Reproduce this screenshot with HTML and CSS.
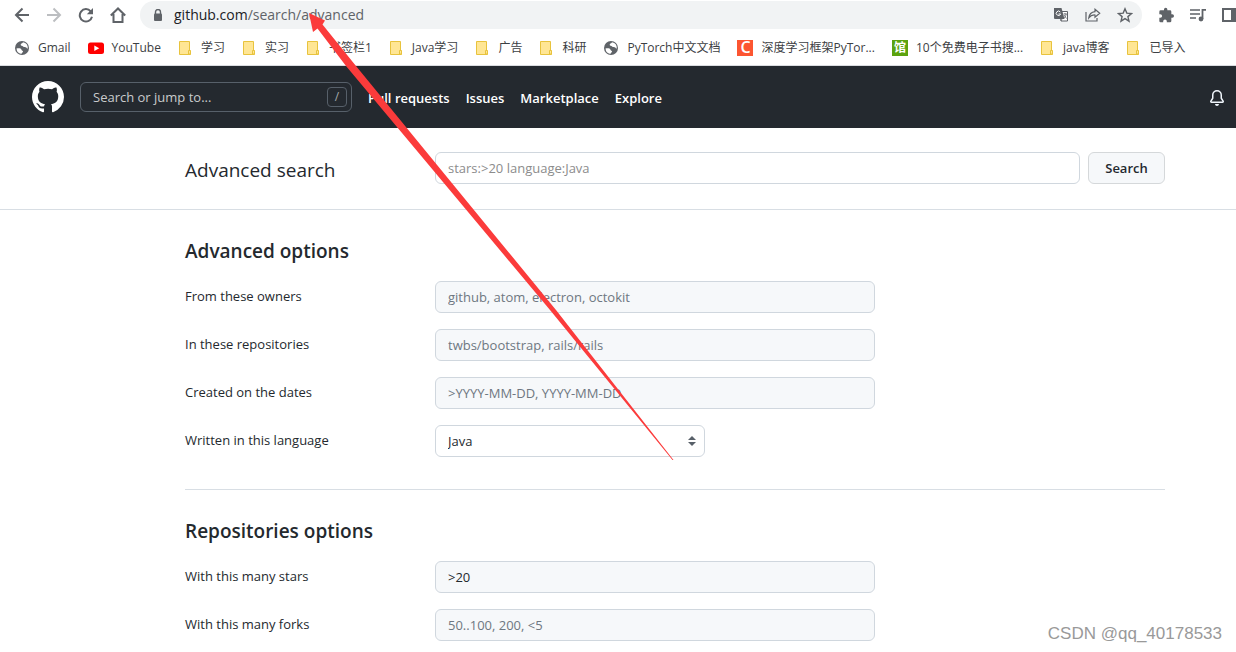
FILE: index.html
```html
<!DOCTYPE html>
<html lang="en">
<head>
<meta charset="utf-8">
<title>Advanced search</title>
<link rel="stylesheet" href="styles.css">
</head>
<body>
<svg class="defs" width="0" height="0" aria-hidden="true">
  <symbol id="folder" viewBox="0 0 16 16"><path d="M1.500 1.500h10v9.500h1v3.500h-11z" fill="#ffe694" stroke="#e8c33d"/><path d="M10.500 14v-3.500h2V14z" fill="#ffe694" stroke="#e8c33d"/></symbol>
  <symbol id="globe" viewBox="0 0 16 16"><circle cx="8" cy="8" r="7" fill="#5f6368"/><path d="M2.500 8.500c2.500-.6 4.500-.2 5 1.200.4 1.200 1.700.7 1.500 2-.2.900-1.500.9-1.600 2.300A6 6 0 0 1 2.500 8.500zM9 2.300c-.4 1.200-2.300 1-2.300 2.400 0 1.300 1.800.8 2.400 1.800.7 1.200 2.400.3 3.200 1 .6.600.8 1.300 1.500 1A6 6 0 0 0 9 2.300z" fill="#fff"/></symbol>
</svg>

<div class="browser">
  <div class="toolbar">
    <button class="tool" aria-label="Back"><svg width="16" height="16" viewBox="0 0 16 16" fill="none" stroke="#5f6368" stroke-width="2"><path d="M15 8H2.500M8.500 1.500 2 8l6.500 6.500"/></svg></button>
    <button class="tool" aria-label="Forward"><svg width="16" height="16" viewBox="0 0 16 16" fill="none" stroke="#bcbec1" stroke-width="2"><path d="M1 8h12.500M7.500 1.500 14 8l-6.500 6.500"/></svg></button>
    <button class="tool" aria-label="Reload"><svg width="16" height="16" viewBox="0 0 16 16"><path d="M12.700 4.300A6.200 6.200 0 1 0 14 9.800" fill="none" stroke="#5f6368" stroke-width="2"/><path d="M15 1v6.200H8.800z" fill="#5f6368"/></svg></button>
    <button class="tool" aria-label="Home"><svg width="16" height="16" viewBox="0 0 16 16" fill="none" stroke="#5f6368" stroke-width="2"><path d="M.800 8.500 8 1.500l7.200 7M3.500 7v8h9V7"/></svg></button>
    <div class="address">
      <svg width="10" height="12" viewBox="0 0 10 12"><path d="M2.500 5V3a2.500 2.500 0 0 1 5 0v2" fill="none" stroke="#5f6368" stroke-width="1.400"/><rect x="1" y="4.500" width="8" height="7.500" rx="1" fill="#5f6368"/></svg>
      <span class="url">github.com<span class="path">/search/advanced</span></span>
      <button class="tool" aria-label="Translate"><svg width="16" height="16" viewBox="0 0 16 16"><path d="M6.500 4.500h8v9.500H8z" fill="#fff" stroke="#5f6368"/><path d="M1 1h7.500l3 11H2a1 1 0 0 1-1-1z" fill="#5f6368"/><path d="M7.300 5A2.200 2.200 0 1 0 7.600 7H5.500" fill="none" stroke="#fff"/><path d="M10.500 7h3.500M12 6v1m1 0c0 2-1 3.500-2 4m0-3 2.500 3.500M9 12l-1 2" fill="none" stroke="#5f6368" stroke-width=".800"/></svg></button>
      <button class="tool" aria-label="Share"><svg width="16" height="16" viewBox="0 0 16 16" fill="none" stroke="#5f6368" stroke-width="1.200"><path d="M1 5v9h11v-3"/><path d="M10 2.200 14.700 6.300 10 10.200V8C7 7.700 5.200 9 3.800 10.800 4.200 7.500 6.200 5 10 4.600z"/></svg></button>
      <button class="tool" aria-label="Bookmark"><svg width="16" height="16" viewBox="0 0 16 16" fill="none" stroke="#5f6368" stroke-width="1.400"><path d="m8 1.800 1.800 4.300 4.700.4-3.600 3.100 1.100 4.600L8 11.700l-4 2.500 1.100-4.600-3.600-3.100 4.700-.4z"/></svg></button>
    </div>
    <button class="tool" aria-label="Extensions"><svg width="16" height="16" viewBox="0 0 24 24" fill="#5f6368"><path d="M21.500 11H20V7a2 2 0 0 0-2-2h-4V3.500a2.500 2.500 0 0 0-5 0V5H4a2 2 0 0 0-2 2v3.800h1.500a2.700 2.700 0 0 1 0 5.400H2V21a2 2 0 0 0 2 2h3.800v-1.500a2.700 2.700 0 0 1 5.400 0V23H18a2 2 0 0 0 2-2v-5h1.500a2.500 2.500 0 0 0 0-5z"/></svg></button>
    <button class="tool" aria-label="Media"><svg width="16" height="16" viewBox="0 0 16 16"><path d="M0 3h10M0 7h10M0 11h6" stroke="#5f6368" stroke-width="1.600"/><path d="M12.500 12V2.800H16" fill="none" stroke="#5f6368" stroke-width="1.800"/><circle cx="11" cy="12" r="2.400" fill="#5f6368"/></svg></button>
    <button class="tool" aria-label="Side panel"><svg width="16" height="16" viewBox="0 0 16 16"><path d="M1 2h14v12H1z" fill="none" stroke="#5f6368" stroke-width="2"/><path d="M9 2h6v12H9z" fill="#5f6368"/></svg></button>
  </div>
  <nav class="bookmarks" aria-label="Bookmarks">
    <a href="#"><svg><use href="#globe"/></svg>Gmail</a>
    <a href="#"><svg viewBox="0 0 16 16"><rect y="2.500" width="16" height="11.500" rx="2.500" fill="#f00"/><path d="m6.300 5.500 5 2.800-5 2.800z" fill="#fff"/></svg>YouTube</a>
    <a class="folder" href="#"><svg><use href="#folder"/></svg>学习</a>
    <a class="folder" href="#"><svg><use href="#folder"/></svg>实习</a>
    <a class="folder" href="#"><svg><use href="#folder"/></svg>书签栏1</a>
    <a class="folder" href="#"><svg><use href="#folder"/></svg>Java学习</a>
    <a class="folder" href="#"><svg><use href="#folder"/></svg>广告</a>
    <a class="folder" href="#"><svg><use href="#folder"/></svg>科研</a>
    <a href="#"><svg><use href="#globe"/></svg>PyTorch中文文档</a>
    <a href="#"><span class="favicon csdn">C</span>深度学习框架PyTor...</a>
    <a href="#"><span class="favicon guan">馆</span>10个免费电子书搜...</a>
    <a class="folder" href="#"><svg><use href="#folder"/></svg>java博客</a>
    <a class="folder" href="#"><svg><use href="#folder"/></svg>已导入</a>
  </nav>
</div>

<header class="site-header">
  <a class="logo" href="#" aria-label="GitHub"><svg width="32" height="32" viewBox="0 0 16 16" fill="#fff"><path d="M8 0C3.580 0 0 3.580 0 8c0 3.540 2.290 6.530 5.470 7.590.4.070.55-.17.55-.38 0-.19-.01-.82-.01-1.490-2.010.37-2.530-.49-2.690-.94-.09-.23-.48-.94-.82-1.130-.28-.15-.68-.52-.01-.53.63-.01 1.080.58 1.230.82.72 1.210 1.870.87 2.330.66.07-.52.28-.87.51-1.070-1.780-.2-3.640-.89-3.640-3.950 0-.87.31-1.590.82-2.150-.08-.2-.36-1.020.08-2.120 0 0 .67-.21 2.200.82.64-.18 1.320-.27 2-.27s1.360.09 2 .27c1.530-1.040 2.200-.82 2.200-.82.44 1.100.16 1.920.08 2.120.51.56.82 1.270.82 2.150 0 3.070-1.870 3.750-3.650 3.950.29.25.54.73.54 1.480 0 1.070-.01 1.930-.01 2.200 0 .21.15.46.55.38A8.010 8.010 0 0 0 16 8c0-4.420-3.580-8-8-8z"/></svg></a>
  <div class="jump">
    <input type="text" placeholder="Search or jump to..." aria-label="Search or jump to">
    <kbd>/</kbd>
  </div>
  <nav class="site-nav" aria-label="Global">
    <a href="#">Pull requests</a><a href="#">Issues</a><a href="#">Marketplace</a><a href="#">Explore</a>
  </nav>
  <button class="bell" aria-label="Notifications"><svg width="16" height="16" viewBox="0 0 16 16" fill="#f0f6fc"><path d="M8 16a2 2 0 0 0 1.985-1.750c.017-.137-.097-.25-.235-.25h-3.500c-.138 0-.252.113-.235.25A2 2 0 0 0 8 16z"/><path fill-rule="evenodd" d="M8 1.500A3.500 3.500 0 0 0 4.500 5v2.947c0 .346-.102.683-.294.970l-1.703 2.556a.18.018 0 0 0-.003.010l.001.006.004.006.006.004.007.001h10.964l.007-.001.006-.004.004-.006.001-.007a.17.017 0 0 0-.003-.010l-1.703-2.554a1.750 1.750 0 0 1-.294-.970V5A3.500 3.500 0 0 0 8 1.500zM3 5a5 5 0 0 1 10 0v2.947c0 .5.015.098.042.139l1.703 2.555A1.518 1.518 0 0 1 13.482 13H2.518a1.518 1.518 0 0 1-1.263-2.360l1.703-2.554A.25.25 0 0 0 3 7.947V5z"/></svg></button>
</header>

<main>
  <form>
    <div class="page-head">
      <h1><label for="q">Advanced search</label></h1>
      <div class="query">
        <input id="q" type="text" class="field plain" placeholder="stars:&gt;20 language:Java">
        <button class="search" type="submit">Search</button>
      </div>
    </div>
    <div class="options">
      <fieldset>
        <legend>Advanced options</legend>
        <div class="row"><label for="owners">From these owners</label><input id="owners" class="field" type="text" placeholder="github, atom, electron, octokit"></div>
        <div class="row"><label for="repos">In these repositories</label><input id="repos" class="field" type="text" placeholder="twbs/bootstrap, rails/rails"></div>
        <div class="row"><label for="dates">Created on the dates</label><input id="dates" class="field" type="text" placeholder="&gt;YYYY-MM-DD, YYYY-MM-DD"></div>
        <div class="row"><label for="lang">Written in this language</label>
          <div class="select"><select id="lang" class="field plain"><option>Java</option></select><svg width="8" height="10" viewBox="0 0 8 10" fill="#586069"><path d="m4 0 4 4H0zM0 6h8l-4 4z"/></svg></div></div>
      </fieldset>
      <fieldset>
        <legend>Repositories options</legend>
        <div class="row"><label for="stars">With this many stars</label><input id="stars" class="field" type="text" value="&gt;20"></div>
        <div class="row"><label for="forks">With this many forks</label><input id="forks" class="field" type="text" placeholder="50..100, 200, &lt;5"></div>
      </fieldset>
    </div>
  </form>
</main>

<svg class="arrow" width="680" height="470" viewBox="0 0 680 470" aria-hidden="true"><path d="M309 13 325 20.500 322.500 24.500 356 66 556 310 673.500 460H672.500L550 310 346 66 317.500 28.500 313 32z" fill="#fb3b3b"/></svg>
<div class="watermark">CSDN @qq_40178533</div>
</body>
</html>
```
FILE: styles.css
```css
* { box-sizing: border-box; }
body {
  margin: 0;
  background: #fff;
  color: #24292e;
  font: 13px/20px "Open Sans", "Noto Sans CJK SC", sans-serif;
  overflow: hidden;
}
button, input, select { font: inherit; color: inherit; }
button { padding: 0; border: 0; background: none; }
a { color: inherit; text-decoration: none; }
svg { display: block; flex: none; }
.defs, .arrow { position: absolute; top: 0; left: 0; pointer-events: none; }

.toolbar { display: flex; align-items: center; gap: 16px; height: 30px; padding-left: 14px; overflow: hidden; }
.tool { flex: none; width: 16px; height: 16px; }
.toolbar > .tool:last-child { margin-right: -2px; }
.address {
  display: flex; flex: 1; align-items: center; gap: 16px;
  height: 28px; margin-left: -2px; padding: 0 9px 0 13px;
  border-radius: 14px; background: #f1f3f4;
}
.url { flex: 1; margin-left: -5px; font-size: 14px; color: #202124; }
.path { color: #5f6368; }
.bookmarks {
  display: flex; gap: 17px; height: 36px; padding: 0 14px;
  align-items: center; border-bottom: 1px solid #dadce0;
  font-size: 12px; line-height: 16px; color: #3c4043; white-space: nowrap;
}
.bookmarks a { display: flex; align-items: center; gap: 8px; }
.bookmarks .folder { gap: 7px; }
.bookmarks svg, .favicon { width: 16px; height: 16px; }
.favicon { color: #fff; text-align: center; }
.csdn { background: #fc5531; font-size: 16px; font-weight: 600; line-height: 15px; }
.guan { background: #5ba30f; font-weight: 700; }

.site-header { display: flex; align-items: center; gap: 16px; height: 62px; padding: 0 11px 0 32px; background: #24292f; color: #fff; }
.jump { display: flex; align-items: center; width: 272px; height: 30px; padding: 0 4px 0 12px; border: 1px solid #57606a; border-radius: 6px; }
.jump input { flex: 1; min-width: 0; padding: 0; border: 0; background: none; outline: 0; }
.jump input::placeholder { color: #c9cbcd; opacity: 1; }
kbd { width: 20px; height: 20px; border: 1px solid #57606a; border-radius: 4px; color: #a5a9ad; font: 12px/18px "Open Sans", sans-serif; text-align: center; }
.site-nav { display: flex; flex: 1; gap: 16px; padding-top: 2px; font-weight: 600; }
.bell { padding-top: 2px; }

.page-head, .options { padding: 0 71px 0 185px; }
.page-head { display: flex; align-items: center; height: 82px; padding-bottom: 2px; border-bottom: 1px solid #d8dee4; }
h1 { width: 250px; margin: 0; padding-top: 4px; font-size: 19px; line-height: 28px; font-weight: 400; }
.query { display: flex; flex: 1; gap: 8px; }
.field { width: 440px; height: 32px; padding: 0 12px; border: 1px solid #d0d7de; border-radius: 6px; background: #f6f8fa; outline: 0; }
.field::placeholder { color: #6e7781; opacity: 1; }
.plain { background: #fff; }
.plain::placeholder { color: #8c8c8c; }
.query .field { flex: 1; width: auto; }
.search { width: 77px; height: 32px; border: 1px solid #d5d8da; border-radius: 6px; background: #f6f8fa; font-weight: 600; }
fieldset { margin: 0; padding: 26px 0 32px; border: 0; border-bottom: 1px solid #d8dee4; }
fieldset:last-child { border-bottom: 0; }
legend { float: left; width: 100%; margin-bottom: 15px; padding: 0; font-size: 19px; line-height: 30px; font-weight: 600; }
.row { display: flex; clear: both; margin-bottom: 16px; }
.row:last-child { margin-bottom: 0; }
.row > label { width: 250px; padding-top: 5px; }
.select { position: relative; width: 270px; }
.select .field { width: 100%; appearance: none; }
.select svg { position: absolute; top: 11px; right: 9px; }
.watermark { position: absolute; right: 14px; bottom: 8px; font: 17px/20px "Liberation Sans", sans-serif; color: #999; }
```
